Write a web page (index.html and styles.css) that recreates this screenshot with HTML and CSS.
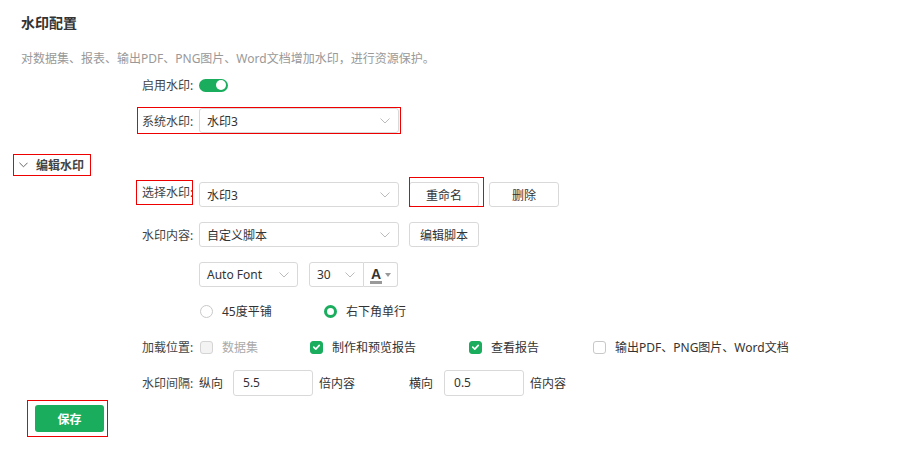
FILE: index.html
```html
<!DOCTYPE html>
<html lang="zh">
<head>
<meta charset="utf-8">
<link rel="stylesheet" href="styles.css">
</head>
<body>
<div class="page">
  <h1 class="title">水印配置</h1>
  <p class="desc">对数据集、报表、输出PDF、PNG图片、Word文档增加水印，进行资源保护。</p>

  <div class="form">
    <div class="row row-toggle">
      <span class="label">启用水印:</span>
      <span class="toggle"><span class="knob"></span></span>
    </div>
    <div class="row row-sys">
      <span class="label">系统水印:</span>
      <div class="select w200"><span>水印3</span><svg class="chev" viewBox="0 0 10 6"><path d="M0.5 0.5 L5 5 L9.5 0.5" fill="none" stroke="#bbb" stroke-width="1"/></svg></div>
    </div>
  </div>

  <div class="section-head">
    <svg class="chev-dark" viewBox="0 0 10 6"><path d="M0.5 0.5 L5 5 L9.5 0.5" fill="none" stroke="#666" stroke-width="1.1"/></svg>
    <span>编辑水印</span>
  </div>

  <div class="form form-edit">
    <div class="row row-choose">
      <span class="label label-clip">选择水印:</span>
      <div class="select w200"><span>水印3</span><svg class="chev" viewBox="0 0 10 6"><path d="M0.5 0.5 L5 5 L9.5 0.5" fill="none" stroke="#bbb" stroke-width="1"/></svg></div>
      <button class="btn btn-marked">重命名</button>
      <button class="btn btn-del">删除</button>
    </div>
    <div class="row row-ctrl">
      <span class="label">水印内容:</span>
      <div class="select w200"><span>自定义脚本</span><svg class="chev" viewBox="0 0 10 6"><path d="M0.5 0.5 L5 5 L9.5 0.5" fill="none" stroke="#bbb" stroke-width="1"/></svg></div>
      <button class="btn">编辑脚本</button>
    </div>
    <div class="row row-ctrl">
      <span class="label"></span>
      <div class="select w99"><span>Auto Font</span><svg class="chev" viewBox="0 0 10 6"><path d="M0.5 0.5 L5 5 L9.5 0.5" fill="none" stroke="#bbb" stroke-width="1"/></svg></div>
      <div class="select w55 size"><span>30</span><svg class="chev" viewBox="0 0 10 6"><path d="M0.5 0.5 L5 5 L9.5 0.5" fill="none" stroke="#bbb" stroke-width="1"/></svg></div>
      <div class="color-btn"><span class="color-a">A</span><span class="caret"></span></div>
    </div>
    <div class="row row-radio">
      <span class="label"></span>
      <label class="opt opt-r1"><span class="radio"></span><span>45度平铺</span></label>
      <label class="opt"><span class="radio on"></span><span>右下角单行</span></label>
    </div>
    <div class="row row-check">
      <span class="label">加载位置:</span>
      <label class="opt opt-c1 disabled"><span class="check dis"></span><span>数据集</span></label>
      <label class="opt opt-c2"><span class="check on"><svg viewBox="0 0 12 12"><path d="M3 6.2 L5.2 8.3 L9 4.2" fill="none" stroke="#fff" stroke-width="1.8" stroke-linecap="round" stroke-linejoin="round"/></svg></span><span>制作和预览报告</span></label>
      <label class="opt opt-c3"><span class="check on"><svg viewBox="0 0 12 12"><path d="M3 6.2 L5.2 8.3 L9 4.2" fill="none" stroke="#fff" stroke-width="1.8" stroke-linecap="round" stroke-linejoin="round"/></svg></span><span>查看报告</span></label>
      <label class="opt"><span class="check"></span><span>输出PDF、PNG图片、Word文档</span></label>
    </div>
    <div class="row row-gap">
      <span class="label">水印间隔:</span>
      <span class="txt">纵向</span>
      <div class="input in1">5.5</div>
      <span class="txt unit">倍内容</span>
      <span class="txt">横向</span>
      <div class="input in2">0.5</div>
      <span class="txt">倍内容</span>
    </div>
  </div>

  <div class="save-wrap">
    <button class="save">保存</button>
  </div>
</div>
</body>
</html>
```
FILE: styles.css
```css
* { box-sizing: border-box; }
html, body { margin: 0; padding: 0; background: #fff; }
body {
  font-family: "Noto Sans", "Noto Sans CJK SC", sans-serif;
  font-size: 12px;
  color: #333;
}
.page { padding: 13px 0 0 21px; }
.title {
  margin: 0;
  font-size: 14px;
  line-height: 20px;
  font-weight: bold;
  color: #333;
}
.desc {
  margin: 17px 0 0;
  line-height: 18px;
  color: #999;
}
.form { margin-left: 121px; display: flex; flex-direction: column; }
.row { display: flex; align-items: center; }
.label { width: 57px; flex: none; color: #444; white-space: nowrap; }
.row-toggle { height: 20px; margin-top: 7px; }
.toggle {
  width: 29px; height: 13px; border-radius: 7px;
  background: #1aad5e; position: relative; display: inline-block;
}
.knob {
  position: absolute; right: 2px; top: 1.5px;
  width: 10px; height: 10px; border-radius: 50%; background: #fff;
}
.row-sys {
  margin-top: 13px;
  margin-left: -4px; padding-left: 4px;
  width: 262px;
  outline: 1px solid #e00;
  height: 25px;
}
.select {
  height: 25px;
  border: 1px solid #d9d9d9;
  border-radius: 3px;
  display: flex; align-items: center; justify-content: space-between;
  padding: 0 7px 0 7px;
  color: #333;
  background: #fff;
  flex: none;
}
.w200 { width: 200px; }
.w99 { width: 99px; }
.w55 { width: 55px; margin-left: 11px; }
.chev { width: 10px; height: 6px; margin-right: 1px; }
.section-head {
  margin: 22px 0 0 -7px;
  width: 76px; height: 20px;
  outline: 1px solid #e00;
  display: flex; align-items: center;
  padding-left: 5px;
  font-weight: bold; color: #444;
}
.chev-dark { width: 9px; height: 6px; margin-right: 8px; }
.row-choose { margin-top: 7px; height: 25px; }
.label-clip {
  margin-left: -5px; padding-left: 5px;
  width: 55px; margin-right: 7px;
  overflow: hidden;
  height: 23px; line-height: 23px;
  align-self: flex-start; margin-top: -1px;
  outline: 1px solid #e00;
}
.btn {
  height: 25px;
  padding: 0;
  width: 70px;
  border: 1px solid #d9d9d9;
  border-radius: 3px;
  background: #fff;
  font: inherit;
  color: #333;
  margin-left: 10px;
  flex: none;
}
.btn-marked { position: relative; }
.btn-marked::after {
  content: ""; position: absolute;
  top: -6px; left: -1px; right: -6px; bottom: -1px;
  border: 1px solid #e00;
}
.btn-del { margin-left: 10px; }
.row-ctrl { margin-top: 15px; height: 25px; }
.size { border-radius: 3px 0 0 3px; }
.color-btn {
  width: 34px; height: 25px;
  border: 1px solid #d9d9d9; border-left: none;
  border-radius: 0 3px 3px 0;
  display: flex; align-items: center; justify-content: center; gap: 3px;
}
.color-a {
  font-family: "Liberation Sans", sans-serif;
  font-weight: bold; font-size: 14px; line-height: 14px;
  color: #333;
  border-bottom: 3px solid #999;
  padding: 0 1px;
  margin-top: 1px;
}
.caret {
  width: 0; height: 0;
  border-left: 3.5px solid transparent; border-right: 3.5px solid transparent;
  border-top: 4px solid #999;
}
.row-radio { margin-top: 14px; height: 20px; }
.opt { display: flex; align-items: center; gap: 9px; color: #333; flex: none; }
.opt-r1 { width: 124px; margin-left: 1px; }
.radio {
  width: 13px; height: 13px; border-radius: 50%;
  border: 1px solid #c8c8c8; background: #fff; flex: none;
}
.radio.on { border: 3.5px solid #1aad5e; }
.row-check { margin-top: 16px; height: 20px; }
.check {
  width: 13px; height: 13px; border-radius: 3px;
  border: 1px solid #c8c8c8; background: #fff; flex: none;
  display: flex; align-items: center; justify-content: center;
}
.check.dis { background: #f3f3f3; border-color: #d4d4d4; }
.check.on { background: #1aad5e; border-color: #1aad5e; }
.check svg { width: 12px; height: 12px; }
.disabled { color: #aaa; }
.opt-c1 { width: 110px; margin-left: 1px; }
.opt-c2 { width: 159px; }
.opt-c3 { width: 124px; }
.row-gap { margin-top: 13px; height: 26px; }
.txt { color: #333; white-space: nowrap; flex: none; }
.input {
  width: 80px; height: 26px; flex: none;
  border: 1px solid #d9d9d9; border-radius: 3px;
  padding-left: 9px; line-height: 24px;
  color: #333;
}
.in1 { margin: 0 6px 0 10px; }
.in2 { margin: 0 6px 0 11px; }
.unit { width: 90px; }
.save-wrap {
  position: relative;
  margin: 4px 0 0 6px;
  width: 81px; height: 37px;
  padding: 5px 0 0 8px;
}
.save-wrap::after {
  content: ""; position: absolute; inset: 0;
  border: 1px solid #e00;
  pointer-events: none;
}
.save {
  width: 69px; height: 27px;
  background: #1aad5e; border: none; border-radius: 3px;
  color: #fff; font: inherit; font-weight: bold;
  padding: 0;
}
```
